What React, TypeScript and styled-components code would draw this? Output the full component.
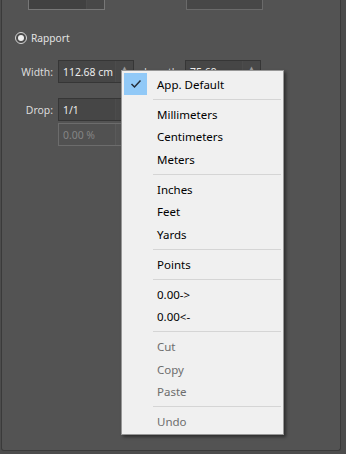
import styled, { createGlobalStyle } from "styled-components";

const GlobalStyle = createGlobalStyle`
  html, body {
    margin: 0;
    padding: 0;
    background: #4c4c4c;
  }
  body {
    font-family: "Noto Sans", "Open Sans", sans-serif;
  }
`;

const Screen = styled.div`
  position: relative;
  width: 346px;
  height: 454px;
  overflow: hidden;
  background: #4c4c4c;
`;

const Panel = styled.div`
  margin-left: 1px;
  width: 338px;
  height: 450px;
  background: #535353;
  border: 1px solid #3a3a3a;
  border-top: none;
  border-radius: 0 0 3px 3px;
  font-size: 10.4px;
  color: #dcdcdc;
  display: flex;
  flex-direction: column;
`;

const TopRow = styled.div`
  display: flex;
  margin-top: -13px;
  padding-left: 26px;
  gap: 81px;
`;

const Field = styled.div<{ $w: number; $disabled?: boolean; $focus?: boolean }>`
  box-sizing: border-box;
  width: ${(p) => p.$w}px;
  height: 23px;
  display: flex;
  align-items: stretch;
  border: 1px solid ${(p) => (p.$focus ? "#777777" : p.$disabled ? "#6c6c6c" : "#363636")};
  background: ${(p) => (p.$disabled ? "#515151" : p.$focus ? "#414141" : "#464646")};
  color: ${(p) => (p.$disabled ? "#858585" : "#ececec")};
`;

const FieldText = styled.div<{ $lift?: number }>`
  flex: 1;
  padding-left: 4px;
  padding-bottom: ${(p) => p.$lift ?? 0}px;
  display: flex;
  align-items: center;
  white-space: nowrap;
  overflow: hidden;
`;

const Spinner = styled.div<{ $disabled?: boolean }>`
  width: 18px;
  border-left: 1px solid ${(p) => (p.$disabled ? "#5a5a5a" : "#4c4c4c")};
  background: ${(p) => (p.$disabled ? "#535353" : "#484848")};
  display: flex;
  justify-content: center;
  padding-top: 4px;
  box-sizing: border-box;
  color: ${(p) => (p.$disabled ? "#707070" : "#9a9a9a")};
  font-size: 6px;
  line-height: 6px;
`;

const Button = styled.div`
  box-sizing: border-box;
  width: 77px;
  height: 23px;
  padding-bottom: 7px;
  border: 1px solid #6a6a6a;
  background: #474747;
  color: #dcdcdc;
  display: flex;
  align-items: center;
  justify-content: center;
`;

const RadioRow = styled.label`
  display: flex;
  align-items: center;
  gap: 4px;
  margin-top: 20px;
  padding-left: 13px;
  height: 16px;
  font-size: 10.2px;
  color: #e2e2e2;
`;

const RadioCircle = styled.span`
  box-sizing: border-box;
  width: 12px;
  height: 12px;
  border-radius: 50%;
  border: 1px solid #d6d6d6;
  background: #4a4a4a;
  display: flex;
  align-items: center;
  justify-content: center;
  &::after {
    content: "";
    width: 6px;
    height: 6px;
    border-radius: 50%;
    background: #f0f0f0;
  }
`;

const FormRow = styled.div<{ $top: number }>`
  display: flex;
  align-items: center;
  margin-top: ${(p) => p.$top}px;
`;

const Label = styled.div`
  width: 51px;
  text-align: right;
  padding-right: 5px;
  white-space: nowrap;
`;

const InlineLabel = styled.div`
  margin: 0 4px 0 10px;
  white-space: nowrap;
`;

const Menu = styled.div`
  position: absolute;
  left: 121px;
  top: 70px;
  width: 159px;
  box-sizing: content-box;
  padding: 2px 0 1px 2px;
  background: #f0f0f0;
  border: 1px solid #979797;
  box-shadow: 2px 2px 3px rgba(0, 0, 0, 0.45);
  font-size: 11.5px;
  color: #000;
`;

const Item = styled.div<{ $disabled?: boolean }>`
  position: relative;
  height: 22.5px;
  display: flex;
  align-items: center;
  padding-left: 33px;
  color: ${(p) => (p.$disabled ? "#6d6d6d" : "#000")};
  white-space: nowrap;
`;

const Check = styled.span`
  position: absolute;
  left: 0;
  top: 0;
  width: 23px;
  height: 22px;
  background: #91c9f7;
  display: flex;
  align-items: center;
  justify-content: center;
`;

const Separator = styled.div`
  height: 7.5px;
  display: flex;
  align-items: center;
  margin-left: 29px;
  margin-right: 2px;
  &::after {
    content: "";
    flex: 1;
    height: 1px;
    background: #d5d5d5;
  }
`;

type Entry = { label: string; disabled?: boolean; checked?: boolean } | "sep";

const entries: Entry[] = [
  { label: "App. Default", checked: true },
  "sep",
  { label: "Millimeters" },
  { label: "Centimeters" },
  { label: "Meters" },
  "sep",
  { label: "Inches" },
  { label: "Feet" },
  { label: "Yards" },
  "sep",
  { label: "Points" },
  "sep",
  { label: "0.00->" },
  { label: "0.00<-" },
  "sep",
  { label: "Cut", disabled: true },
  { label: "Copy", disabled: true },
  { label: "Paste", disabled: true },
  "sep",
  { label: "Undo", disabled: true },
];

const App: React.FC = () => {
  return (
    <>
      <GlobalStyle />
      <Screen>
        <Panel>
          <TopRow>
            <Field $w={77} $focus>
              <FieldText $lift={7}>0.00 cm</FieldText>
              <Spinner />
            </Field>
            <Button>Zoom</Button>
          </TopRow>

          <RadioRow>
            <RadioCircle />
            Rapport
          </RadioRow>

          <FormRow $top={14}>
            <Label>Width:</Label>
            <Field $w={76}>
              <FieldText>112.68 cm</FieldText>
              <Spinner>▲</Spinner>
            </Field>
            <InlineLabel>Length:</InlineLabel>
            <Field $w={76}>
              <FieldText>75.69 cm</FieldText>
              <Spinner>▲</Spinner>
            </Field>
          </FormRow>

          <FormRow $top={15}>
            <Label>Drop:</Label>
            <Field $w={76}>
              <FieldText>1/1</FieldText>
              <Spinner>▼</Spinner>
            </Field>
          </FormRow>

          <FormRow $top={2}>
            <Label />
            <Field $w={76} $disabled>
              <FieldText>0.00 %</FieldText>
              <Spinner $disabled>▲</Spinner>
            </Field>
          </FormRow>
        </Panel>

        <Menu>
          {entries.map((e, i) =>
            e === "sep" ? (
              <Separator key={i} />
            ) : (
              <Item key={i} $disabled={e.disabled}>
                {e.checked ? (
                  <Check>
                    <svg width="12" height="10" viewBox="0 0 12 10">
                      <path d="M1.5 5 L4.5 8 L10.5 1.5" fill="none" stroke="#252d38" strokeWidth="1.5" />
                    </svg>
                  </Check>
                ) : null}
                {e.label}
              </Item>
            )
          )}
        </Menu>
      </Screen>
    </>
  );
};

export default App;
